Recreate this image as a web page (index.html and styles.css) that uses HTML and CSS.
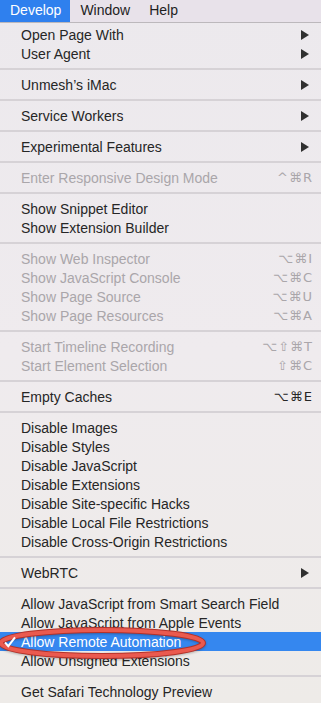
FILE: index.html
```html
<!DOCTYPE html>
<html lang="en">
<head>
  <meta charset="UTF-8" />
  <meta name="viewport" content="width=device-width, initial-scale=1.0"/>
  <title>Develop menu</title>
  <link rel="stylesheet" href="styles.css">
</head>
<body>

  <!-- Menu bar -->
  <div class="menubar">
    <span class="mb-item active">Develop</span>
    <span class="mb-item">Window</span>
    <span class="mb-item">Help</span>
  </div>

  <!-- Develop menu -->
  <div class="menu">
    <div class="item"><span>Open Page With</span><span class="arrow"></span></div>
    <div class="item"><span>User Agent</span><span class="arrow"></span></div>
    <div class="sep"></div>
    <div class="item"><span>Unmesh’s iMac</span><span class="arrow"></span></div>
    <div class="sep"></div>
    <div class="item"><span>Service Workers</span><span class="arrow"></span></div>
    <div class="sep"></div>
    <div class="item"><span>Experimental Features</span><span class="arrow"></span></div>
    <div class="sep"></div>
    <div class="item off"><span>Enter Responsive Design Mode</span><span class="key">^⌘R</span></div>
    <div class="sep"></div>
    <div class="item"><span>Show Snippet Editor</span></div>
    <div class="item"><span>Show Extension Builder</span></div>
    <div class="sep"></div>
    <div class="item off"><span>Show Web Inspector</span><span class="key">⌥⌘I</span></div>
    <div class="item off"><span>Show JavaScript Console</span><span class="key">⌥⌘C</span></div>
    <div class="item off"><span>Show Page Source</span><span class="key">⌥⌘U</span></div>
    <div class="item off"><span>Show Page Resources</span><span class="key">⌥⌘A</span></div>
    <div class="sep"></div>
    <div class="item off"><span>Start Timeline Recording</span><span class="key">⌥⇧⌘T</span></div>
    <div class="item off"><span>Start Element Selection</span><span class="key">⇧⌘C</span></div>
    <div class="sep"></div>
    <div class="item"><span>Empty Caches</span><span class="key">⌥⌘E</span></div>
    <div class="sep"></div>
    <div class="item"><span>Disable Images</span></div>
    <div class="item"><span>Disable Styles</span></div>
    <div class="item"><span>Disable JavaScript</span></div>
    <div class="item"><span>Disable Extensions</span></div>
    <div class="item"><span>Disable Site-specific Hacks</span></div>
    <div class="item"><span>Disable Local File Restrictions</span></div>
    <div class="item"><span>Disable Cross-Origin Restrictions</span></div>
    <div class="sep"></div>
    <div class="item"><span>WebRTC</span><span class="arrow"></span></div>
    <div class="sep"></div>
    <div class="item"><span>Allow JavaScript from Smart Search Field</span></div>
    <div class="item"><span>Allow JavaScript from Apple Events</span></div>
    <div class="item selected">
      <svg class="check" width="12" height="12" viewBox="0 0 12 12"><path d="M1 6.5 L4.3 10.2 L11 1.3" fill="none" stroke="#fff" stroke-width="2"/></svg>
      <span>Allow Remote Automation</span>
    </div>
    <div class="item"><span>Allow Unsigned Extensions</span></div>
    <div class="sep"></div>
    <div class="item"><span>Get Safari Technology Preview</span></div>
  </div>

  <!-- red annotation ring -->
  <svg class="ring" width="321" height="40" viewBox="0 0 321 40">
    <ellipse cx="102" cy="19" rx="101" ry="13" fill="none" stroke="#b3312a" stroke-width="6"/>
    <ellipse cx="102" cy="19" rx="101" ry="13" fill="none" stroke="#ea5a4f" stroke-width="4"/>
  </svg>

</body>
</html>
```

FILE: styles.css
```css
* { box-sizing: border-box; }
body {
  margin: 0;
  padding: 0;
  width: 321px;
  height: 703px;
  overflow: hidden;
  position: relative;
  font-family: 'Liberation Sans', Arial, sans-serif;
  font-size: 14px;
  color: #262626;
  background: linear-gradient(180deg, #ece9ed 0%, #efebee 50%, #eeebe8 100%);
}

.menubar {
  display: flex;
  height: 23px;
  background: #e8e2ea;
  border-bottom: 1px solid #bcb8bc;
}

.mb-item {
  padding: 0 9px 0 10px;
  line-height: 21px;
  color: #1e1e1e;
}

.mb-item.active {
  background: #2f80ee;
  color: #fff;
}

.menu {
  padding-top: 2px;
}

.item {
  position: relative;
  display: flex;
  align-items: center;
  justify-content: space-between;
  height: 19px;
  padding: 0 9px 0 21px;
  white-space: nowrap;
}

.item.off { color: #aaa6aa; }

.item.selected {
  background: #3587ef;
  color: #fff;
  justify-content: flex-start;
}

.check {
  position: absolute;
  left: 4px;
  top: 4px;
  z-index: 5;
}

.key {
  font-family: 'DejaVu Sans', sans-serif;
  font-size: 13px;
  letter-spacing: 1px;
  margin-right: -1px;
}

.arrow {
  width: 0;
  height: 0;
  margin-right: 3px;
  border-top: 5px solid transparent;
  border-bottom: 5px solid transparent;
  border-left: 8px solid #303030;
}

.sep {
  height: 12px;
  display: flex;
  align-items: center;
}

.sep::before {
  content: "";
  display: block;
  width: 100%;
  height: 2px;
  background: #d6d2d6;
}

.ring {
  position: absolute;
  left: 0;
  top: 624px;
  filter: drop-shadow(0 1px 1px rgba(0,0,0,0.25));
}
```
